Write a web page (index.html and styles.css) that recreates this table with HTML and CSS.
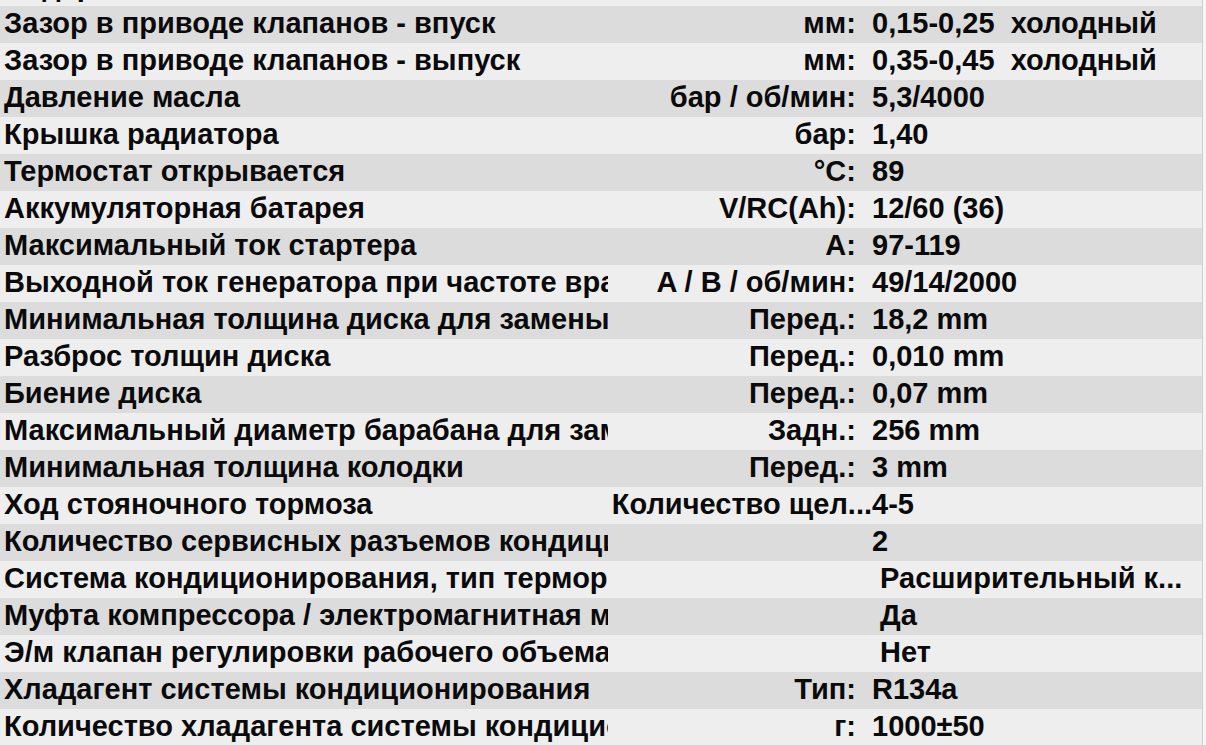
FILE: index.html
```html
<!DOCTYPE html>
<html lang="ru">
<head>
<meta charset="utf-8">
<title>Технические данные</title>
<link rel="stylesheet" href="styles.css">
</head>
<body>
<div class="sheet">
  <div class="row light"><div class="label">Содержание CO</div><div class="unit"></div><div class="value"></div></div>
  <div class="row gray"><div class="label">Зазор в приводе клапанов - впуск</div><div class="unit">мм:&nbsp;&nbsp;</div><div class="value">0,15-0,25  холодный</div></div>
  <div class="row light"><div class="label">Зазор в приводе клапанов - выпуск</div><div class="unit">мм:&nbsp;&nbsp;</div><div class="value">0,35-0,45  холодный</div></div>
  <div class="row gray"><div class="label">Давление масла</div><div class="unit">бар / об/мин:&nbsp;&nbsp;</div><div class="value">5,3/4000</div></div>
  <div class="row light"><div class="label">Крышка радиатора</div><div class="unit">бар:&nbsp;&nbsp;</div><div class="value">1,40</div></div>
  <div class="row gray"><div class="label">Термостат открывается</div><div class="unit">°C:&nbsp;&nbsp;</div><div class="value">89</div></div>
  <div class="row light"><div class="label">Аккумуляторная батарея</div><div class="unit">V/RC(Ah):&nbsp;&nbsp;</div><div class="value">12/60 (36)</div></div>
  <div class="row gray"><div class="label">Максимальный ток стартера</div><div class="unit">A:&nbsp;&nbsp;</div><div class="value">97-119</div></div>
  <div class="row light"><div class="label">Выходной ток генератора при частоте вращения</div><div class="unit">A / B / об/мин:&nbsp;&nbsp;</div><div class="value">49/14/2000</div></div>
  <div class="row gray"><div class="label">Минимальная толщина диска для замены</div><div class="unit">Перед.:&nbsp;&nbsp;</div><div class="value">18,2 mm</div></div>
  <div class="row light"><div class="label">Разброс толщин диска</div><div class="unit">Перед.:&nbsp;&nbsp;</div><div class="value">0,010 mm</div></div>
  <div class="row gray"><div class="label">Биение диска</div><div class="unit">Перед.:&nbsp;&nbsp;</div><div class="value">0,07 mm</div></div>
  <div class="row light"><div class="label">Максимальный диаметр барабана для замены</div><div class="unit">Задн.:&nbsp;&nbsp;</div><div class="value">256 mm</div></div>
  <div class="row gray"><div class="label">Минимальная толщина колодки</div><div class="unit">Перед.:&nbsp;&nbsp;</div><div class="value">3 mm</div></div>
  <div class="row light"><div class="label">Ход стояночного тормоза</div><div class="unit">Количество щел...</div><div class="value">4-5</div></div>
  <div class="row gray"><div class="label">Количество сервисных разъемов кондиционера</div><div class="unit"></div><div class="value">2</div></div>
  <div class="row light"><div class="label">Система кондиционирования, тип терморегулирующего клапана</div><div class="unit"></div><div class="value">&nbsp;Расширительный к...</div></div>
  <div class="row gray"><div class="label">Муфта компрессора / электромагнитная муфта</div><div class="unit"></div><div class="value">&nbsp;Да</div></div>
  <div class="row light"><div class="label">Э/м клапан регулировки рабочего объема</div><div class="unit"></div><div class="value">&nbsp;Нет</div></div>
  <div class="row gray"><div class="label">Хладагент системы кондиционирования</div><div class="unit">Тип:&nbsp;&nbsp;</div><div class="value">R134a</div></div>
  <div class="row light"><div class="label">Количество хладагента системы кондиционирования</div><div class="unit">г:&nbsp;&nbsp;</div><div class="value">1000±50</div></div>
</div>
</body>
</html>
```
FILE: styles.css
```css
html, body {
  margin: 0;
  padding: 0;
  background: #f6f6f6;
}
body {
  font-family: "Liberation Sans", Arial, sans-serif;
  font-weight: bold;
  font-size: 29px;
  color: #0a0a0a;
  overflow: hidden;
}
.sheet {
  width: 1202px;
  margin-top: -31px;
  border-right: 1px solid #cfcfcf;
}
.row {
  display: grid;
  grid-template-columns: 608px 264px 1fr;
  height: 37px;
  line-height: 34px;
  padding-bottom: 3px;
  box-sizing: border-box;
  white-space: pre;
}
.row.gray { background: #dcdcdc; }
.row.light { background: #eeeeee; }
.label {
  padding-left: 4px;
  overflow: hidden;
  text-overflow: clip;
}
.unit {
  text-align: right;
  overflow: hidden;
}
.value {
  overflow: hidden;
  padding-right: 16px;
}
```
